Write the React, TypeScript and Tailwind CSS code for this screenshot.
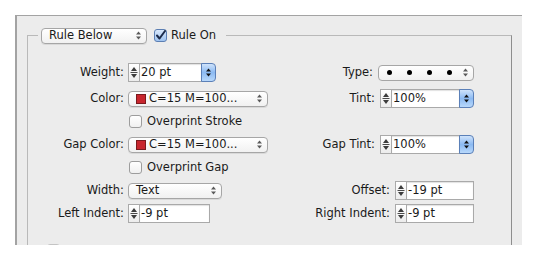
import React from 'react';

const font = "font-['DejaVu_Sans',_'Liberation_Sans',_sans-serif]";

function UpDown({ className = '' }: { className?: string }) {
  return (
    <svg width="5" height="9" viewBox="0 0 5 9" className={className}>
      <path d="M2.5 0.5 L5 3.5 L0 3.5 Z" fill="#5a5a5a" />
      <path d="M2.5 8.5 L5 5.5 L0 5.5 Z" fill="#5a5a5a" />
    </svg>
  );
}

function Popup({ width, children }: { width: string; children: React.ReactNode }) {
  return (
    <div
      className={`${width} h-[16px] flex items-center justify-between pl-[7px] pr-[5px] rounded-[4px] border border-[#a6a6a6] bg-gradient-to-b from-white to-[#f1f1f1] shadow-[0_1px_0_rgba(0,0,0,0.08)]`}
    >
      <div className="flex items-center gap-[3px] leading-none">{children}</div>
      <UpDown />
    </div>
  );
}

function Arrows() {
  return (
    <div className="w-[12px] h-[19px] border border-[#aaaaaa] bg-gradient-to-b from-white to-[#ececec] flex items-center justify-center">
      <svg width="8" height="15" viewBox="0 0 8 15">
        <path d="M4 2 L7 6 L1 6 Z" fill="#3c3c3c" />
        <line x1="0.5" y1="7.5" x2="7.5" y2="7.5" stroke="#4a4a4a" strokeWidth="1" />
        <path d="M4 13 L7 9 L1 9 Z" fill="#3c3c3c" />
      </svg>
    </div>
  );
}

function Spinner({ value, width, combo }: { value: string; width: string; combo?: boolean }) {
  return (
    <div className="flex items-center">
      <Arrows />
      <div
        className={`${width} h-[19px] flex items-center pl-[1px] bg-white border border-[#a9a9a9] border-l-0 shadow-[inset_0_1px_1px_rgba(0,0,0,0.12)] leading-none`}
      >
        {value}
      </div>
      {combo && (
        <div className="w-[15px] h-[19px] rounded-r-[4px] border border-[#5b80b8] bg-gradient-to-b from-[#cfe3fb] via-[#8cbaf2] to-[#b8d8fb] flex items-center justify-center -ml-[1px]">
          <svg width="5" height="9" viewBox="0 0 5 9">
            <path d="M2.5 0.5 L5 3.5 L0 3.5 Z" fill="#111" />
            <path d="M2.5 8.5 L5 5.5 L0 5.5 Z" fill="#111" />
          </svg>
        </div>
      )}
    </div>
  );
}

function Check({ checked }: { checked?: boolean }) {
  if (checked) {
    return (
      <div className="w-[13px] h-[13px] rounded-[3px] border border-[#5c7fb3] bg-gradient-to-b from-[#d9e8fb] to-[#9fc3ef] flex items-center justify-center">
        <svg width="11" height="11" viewBox="0 0 11 11">
          <path d="M2 5.5 L4.5 8.5 L10 1" fill="none" stroke="#1c2b4a" strokeWidth="2" strokeLinecap="round" strokeLinejoin="round" />
        </svg>
      </div>
    );
  }
  return (
    <div className="w-[13px] h-[13px] rounded-[3px] border border-[#9d9d9d] bg-gradient-to-b from-white to-[#f0f0f0]" />
  );
}

function Swatch() {
  return <div className="w-[10px] h-[10px] bg-[#c8262e] border border-[#7a1a1e]" />;
}

function Row({
  left,
  right,
  extra = '',
}: {
  left: [string, React.ReactNode] | null;
  right?: React.ReactNode;
  extra?: string;
}) {
  return (
    <div className={`h-[23px] flex items-center justify-between ${extra}`}>
      <div className="flex items-center gap-[4px]">
        <div className="w-[96px] text-right">{left ? left[0] : ''}</div>
        {left && left[1]}
      </div>
      {right}
    </div>
  );
}

function Right({ label, children }: { label: string; children: React.ReactNode }) {
  return (
    <div className="flex items-center gap-[5px]">
      <span>{label}</span>
      {children}
    </div>
  );
}

export default function App() {
  return (
    <div className={`w-[538px] h-[260px] bg-white pt-[15px] pl-[15px] text-[11.5px] text-[#1a1a1a] ${font}`}>
      <div className="w-[507px] h-[230px] bg-[#ececec] border-t border-l-2 border-[#a3a3a3] overflow-hidden">
        <fieldset className="ml-[10px] mt-[11px] w-[485px] h-[260px] border border-b-0 border-[#b9b9b9] border-r-[#8e8e8e] pt-[17px] pr-[37px]">
          <legend className="ml-[10px] pl-[3px] pr-[10px]">
            <div className="flex items-center">
              <Popup width="w-[106px]">
                <span>Rule Below</span>
              </Popup>
              <div className="ml-[7px] flex items-center gap-[4px]">
                <Check checked />
                <span>Rule On</span>
              </div>
            </div>
          </legend>

          <Row
            extra="mb-[3px]"
            left={['Weight:', <Spinner value="20 pt" width="w-[62px]" combo />]}
            right={
              <Right label="Type:">
                <div className="w-[96px] h-[16px] flex items-center justify-between pl-[8px] pr-[5px] rounded-[4px] border border-[#a6a6a6] bg-gradient-to-b from-white to-[#f1f1f1]">
                  <div className="flex items-center gap-[15px]">
                    <div className="w-[5px] h-[5px] rounded-full bg-black" />
                    <div className="w-[5px] h-[5px] rounded-full bg-black" />
                    <div className="w-[5px] h-[5px] rounded-full bg-black" />
                    <div className="w-[5px] h-[5px] rounded-full bg-black" />
                  </div>
                  <UpDown />
                </div>
              </Right>
            }
          />
          <Row
            left={[
              'Color:',
              <Popup width="w-[140px]">
                <Swatch />
                <span>C=15 M=100...</span>
              </Popup>,
            ]}
            right={
              <Right label="Tint:">
                <Spinner value="100%" width="w-[68px]" combo />
              </Right>
            }
          />
          <Row
            left={[
              '',
              <div className="flex items-center gap-[5px] ml-[1px]">
                <Check />
                <span>Overprint Stroke</span>
              </div>,
            ]}
          />
          <Row
            left={[
              'Gap Color:',
              <Popup width="w-[140px]">
                <Swatch />
                <span>C=15 M=100...</span>
              </Popup>,
            ]}
            right={
              <Right label="Gap Tint:">
                <Spinner value="100%" width="w-[68px]" combo />
              </Right>
            }
          />
          <Row
            left={[
              '',
              <div className="flex items-center gap-[5px] ml-[1px]">
                <Check />
                <span>Overprint Gap</span>
              </div>,
            ]}
          />
          <Row
            left={[
              'Width:',
              <Popup width="w-[94px]">
                <span>Text</span>
              </Popup>,
            ]}
            right={
              <Right label="Offset:">
                <Spinner value="-19 pt" width="w-[67px]" />
              </Right>
            }
          />
          <Row
            left={['Left Indent:', <Spinner value="-9 pt" width="w-[70px]" />]}
            right={
              <Right label="Right Indent:">
                <Spinner value="-9 pt" width="w-[67px]" />
              </Right>
            }
          />
          {/* next option row, clipped by the panel edge */}
          <div className="mt-[19px] ml-[19px] flex items-start h-[13px]">
            <div className="w-[13px] h-[13px] rounded-[3px] border border-[#c4c4c4] bg-[#f4f4f4]" />
          </div>
        </fieldset>
      </div>
    </div>
  );
}
